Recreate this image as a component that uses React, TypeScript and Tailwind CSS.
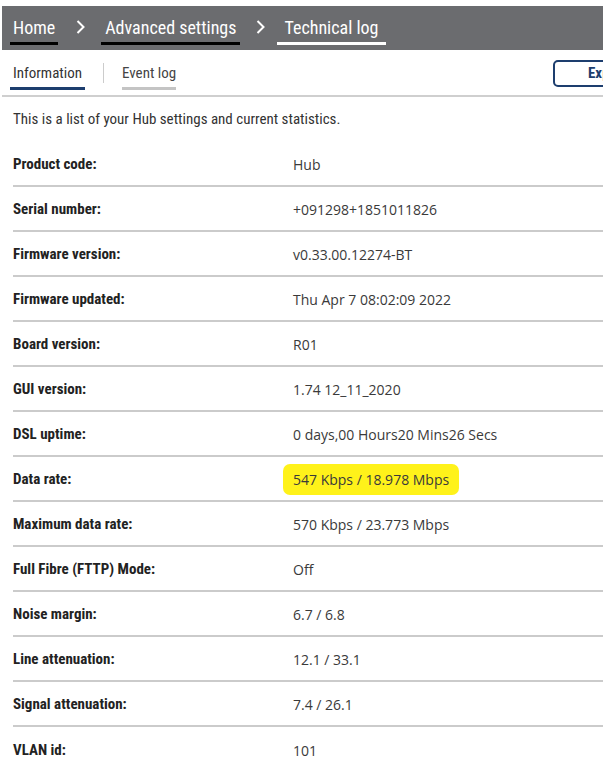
import React from "react";

const rows: [string, string][] = [
  ["Product code:", "Hub"],
  ["Serial number:", "+091298+1851011826"],
  ["Firmware version:", "v0.33.00.12274-BT"],
  ["Firmware updated:", "Thu Apr 7 08:02:09 2022"],
  ["Board version:", "R01"],
  ["GUI version:", "1.74 12_11_2020"],
  ["DSL uptime:", "0 days,00 Hours20 Mins26 Secs"],
  ["Data rate:", "547 Kbps / 18.978 Mbps"],
  ["Maximum data rate:", "570 Kbps / 23.773 Mbps"],
  ["Full Fibre (FTTP) Mode:", "Off"],
  ["Noise margin:", "6.7 / 6.8"],
  ["Line attenuation:", "12.1 / 33.1"],
  ["Signal attenuation:", "7.4 / 26.1"],
  ["VLAN id:", "101"],
];

const cond = "font-['Liberation_Sans_Narrow','Roboto_Condensed',Roboto,sans-serif]";
const val = "font-['Segoe_UI','Open_Sans',sans-serif]";

function Chevron({ cls }: { cls: string }) {
  return (
    <svg width="9" height="16" viewBox="0 0 9 16" className={cls}>
      <path d="M1.5 2 L7.5 8 L1.5 14" stroke="white" strokeWidth="2" fill="none" />
    </svg>
  );
}

export default function App() {
  return (
    <div className="w-[603px] h-[758px] overflow-hidden bg-white pt-[6px]">
      <div className={`ml-[2px] h-[44px] bg-[#6b6c6f] flex items-stretch pl-[8px] ${cond}`}>
        <div className="flex flex-col justify-center px-[3px] border-b-[3px] border-black mb-[5px] pt-[7px] text-white text-[18px] leading-none">
          Home
        </div>
        <div className="flex items-center pb-[3px]"><Chevron cls="ml-[18px] mr-[16px]" /></div>
        <div className="flex flex-col justify-center px-[4px] border-b-[3px] border-black mb-[5px] pt-[7px] text-white text-[18px] leading-none">
          Advanced settings
        </div>
        <div className="flex items-center pb-[3px]"><Chevron cls="ml-[16px] mr-[12px]" /></div>
        <div className="flex flex-col justify-center px-[7px] border-b-[3px] border-white mb-[5px] pt-[7px] text-white text-[18px] leading-none">
          Technical log
        </div>
      </div>

      <div className={`ml-[2px] h-[47px] border-b-2 border-[#cfcfcf] flex items-start ${cond}`}>
        <div className="ml-[8px] mt-[14px] px-[3px] pb-[5px] border-b-[3px] border-[#1d3e6e] text-[15px] leading-[18px] text-[#333]">
          Information
        </div>
        <div className="ml-[18px] mt-[13px] w-[1px] h-[20px] bg-[#cccccc]" />
        <div className="ml-[18px] mt-[14px] pb-[5px] border-b-[3px] border-[#c4c4c4] text-[15px] leading-[18px] text-[#444]">
          Event log
        </div>
        <div className="ml-auto mt-[10px] shrink-0 w-[50px] h-[27px] overflow-visible relative">
          <div className="absolute left-0 top-0 h-[27px] w-[120px] border-2 border-[#1d3e6e] rounded-[5px] flex items-center pl-[33px] text-[15px] font-bold text-[#1d3e6e]">
            Export
          </div>
        </div>
      </div>

      <div className={`pl-[13px] h-[45px] flex items-center text-[15px] text-[#333] ${cond}`}>
        This is a list of your Hub settings and current statistics.
      </div>

      <div className="ml-[13px]">
        {rows.map(([k, v], i) => (
          <div
            key={k}
            className={`h-[45px] flex items-center pt-[1px] ${i < rows.length - 1 ? "border-b-2 border-[#cbcbcb]" : ""}`}
          >
            <div className={`w-[280px] shrink-0 text-[15px] font-bold text-[#222] ${cond}`}>{k}</div>
            <div className={`text-[14px] text-[#3a3a3a] ${val}`}>
              {k === "Data rate:" ? (
                <span className="-ml-[10px] inline-block px-[10px] py-[5px] bg-[#fff21a] rounded-[7px]">{v}</span>
              ) : (
                v
              )}
            </div>
          </div>
        ))}
      </div>
    </div>
  );
}
